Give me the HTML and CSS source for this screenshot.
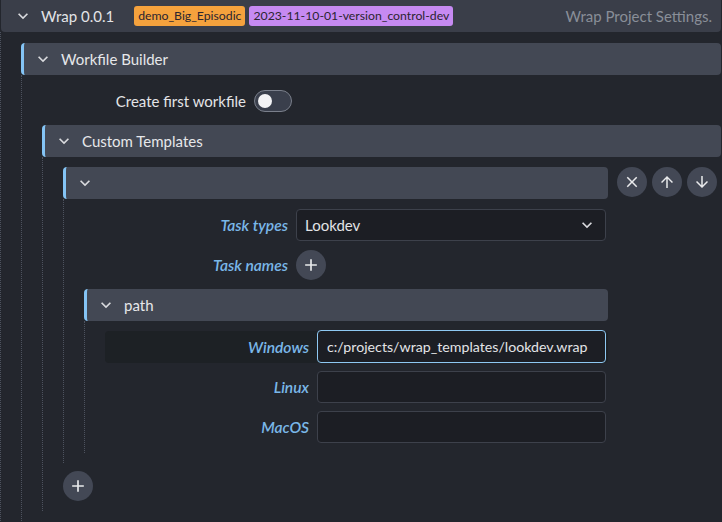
FILE: index.html
```html
<!DOCTYPE html>
<html lang="en">
<head>
<meta charset="utf-8">
<title>Wrap Project Settings</title>
<link rel="stylesheet" href="styles.css">
</head>
<body>
<div class="root">
  <div class="top-header">
    <svg class="chev" viewBox="0 0 24 24"><path d="M16.59 8.59L12 13.17 7.41 8.59 6 10l6 6 6-6z"/></svg>
    <span class="title">Wrap 0.0.1</span>
    <span class="badge badge-orange">demo_Big_Episodic</span>
    <span class="badge badge-purple">2023-11-10-01-version_control-dev</span>
    <span class="hint">Wrap Project Settings.</span>
  </div>
  <div class="content root-content">
    <section class="section">
      <div class="sec-head">
        <svg class="chev" viewBox="0 0 24 24"><path d="M16.59 8.59L12 13.17 7.41 8.59 6 10l6 6 6-6z"/></svg>
        <span>Workfile Builder</span>
      </div>
      <div class="content">
        <div class="field">
          <span class="label plain">Create first workfile</span>
          <span class="toggle"><span class="knob"></span></span>
        </div>
        <section class="section">
          <div class="sec-head">
            <svg class="chev" viewBox="0 0 24 24"><path d="M16.59 8.59L12 13.17 7.41 8.59 6 10l6 6 6-6z"/></svg>
            <span>Custom Templates</span>
          </div>
          <div class="content">
            <div class="item">
              <div class="item-main">
                <div class="sec-head">
                  <svg class="chev" viewBox="0 0 24 24"><path d="M16.59 8.59L12 13.17 7.41 8.59 6 10l6 6 6-6z"/></svg>
                </div>
                <div class="content">
                  <div class="field">
                    <span class="label">Task types</span>
                    <div class="select">
                      <span>Lookdev</span>
                      <svg class="chev" viewBox="0 0 24 24"><path d="M16.59 8.59L12 13.17 7.41 8.59 6 10l6 6 6-6z"/></svg>
                    </div>
                  </div>
                  <div class="field">
                    <span class="label">Task names</span>
                    <span class="circle-btn">
                      <svg class="icon-plus" viewBox="0 0 24 24"><path d="M19 13h-6v6h-2v-6H5v-2h6V5h2v6h6v2z"/></svg>
                    </span>
                  </div>
                  <section class="section">
                    <div class="sec-head">
                      <svg class="chev" viewBox="0 0 24 24"><path d="M16.59 8.59L12 13.17 7.41 8.59 6 10l6 6 6-6z"/></svg>
                      <span>path</span>
                    </div>
                    <div class="content">
                      <div class="field field-active">
                        <span class="label">Windows</span>
                        <div class="input input-focus">c:/projects/wrap_templates/lookdev.wrap</div>
                      </div>
                      <div class="field">
                        <span class="label">Linux</span>
                        <div class="input"></div>
                      </div>
                      <div class="field">
                        <span class="label">MacOS</span>
                        <div class="input"></div>
                      </div>
                    </div>
                  </section>
                </div>
              </div>
              <div class="item-tools">
                <span class="circle-btn">
                  <svg class="icon" viewBox="0 0 24 24"><path d="M19 6.41L17.59 5 12 10.59 6.41 5 5 6.41 10.59 12 5 17.59 6.41 19 12 13.41 17.59 19 19 17.59 13.41 12z"/></svg>
                </span>
                <span class="circle-btn">
                  <svg class="icon" viewBox="0 0 24 24"><path d="M4 12l1.41 1.41L11 7.83V20h2V7.83l5.58 5.59L20 12l-8-8-8 8z"/></svg>
                </span>
                <span class="circle-btn">
                  <svg class="icon" viewBox="0 0 24 24"><path d="M20 12l-1.41-1.41L13 16.17V4h-2v12.17l-5.58-5.59L4 12l8 8 8-8z"/></svg>
                </span>
              </div>
            </div>
            <span class="circle-btn">
              <svg class="icon-plus" viewBox="0 0 24 24"><path d="M19 13h-6v6h-2v-6H5v-2h6V5h2v6h6v2z"/></svg>
            </span>
          </div>
        </section>
      </div>
    </section>
  </div>
</div>
</body>
</html>
```

FILE: styles.css
```css
* { box-sizing: border-box; }

html, body {
  margin: 0;
  padding: 0;
  background: #23262d;
  color: #e3e4e7;
  font-family: Lato, "Noto Sans", sans-serif;
  font-size: 15px;
  overflow: hidden;
  height: 100%;
}

.root {
  margin-right: 1px;
  height: 100%;
  display: flex;
  flex-direction: column;
}

.top-header {
  height: 32px;
  margin-left: 1px;
  background: #3a3e49;
  border-radius: 0 0 4px 4px;
  display: flex;
  align-items: center;
  padding: 0 9px 0 12px;
  flex-shrink: 0;
}

.chev {
  width: 20px;
  height: 20px;
  fill: #d9dade;
  flex-shrink: 0;
}

.title {
  margin-left: 8px;
  margin-right: 20px;
  font-size: 15px;
}

.badge {
  height: 20px;
  line-height: 20px;
  padding: 0 4px;
  border-radius: 3px;
  font-size: 12.25px;
  color: #2b2530;
  margin-right: 4px;
}

.badge-orange { background: #f5a23d; }
.badge-purple { background: #c68af2; }

.hint {
  margin-left: auto;
  color: #898e98;
  font-size: 15px;
}

.content {
  border-left: 1px dotted #4d525e;
  padding: 10px 0 10px 20px;
  display: flex;
  flex-direction: column;
  gap: 8px;
  min-width: 0;
}

.root-content {
  padding-top: 11px;
  flex: 1;
}

.sec-head {
  height: 32px;
  background: #434854;
  border-left: 3px solid #84c4f5;
  border-radius: 4px;
  display: flex;
  align-items: center;
  gap: 8px;
  padding-left: 9px;
  color: #e6e7ea;
}

.field {
  display: grid;
  grid-template-columns: 204px minmax(0, 1fr);
  column-gap: 8px;
  align-items: center;
  min-height: 32px;
  padding-right: 2px;
}

.label {
  text-align: right;
  font-style: italic;
  color: #7ab7e8;
  font-weight: 600;
  font-size: 15.6px;
}

.label.plain {
  font-style: normal;
  font-weight: 400;
  font-size: 15px;
  color: #e3e4e7;
}

.field-active {
  background: #1d2125;
  border-radius: 4px;
}

.toggle {
  width: 38px;
  height: 22px;
  border-radius: 11px;
  border: 1px solid #7a7f8b;
  background: #3a3f4c;
  display: flex;
  align-items: center;
  padding-left: 3px;
}

.knob {
  width: 14px;
  height: 14px;
  border-radius: 50%;
  background: #f3f3f5;
}

.select {
  height: 32px;
  background: #1c1e24;
  border: 1px solid #3d414b;
  border-radius: 4px;
  display: flex;
  align-items: center;
  justify-content: space-between;
  padding: 0 8px 0 8px;
}

.input {
  height: 32px;
  background: #1c1e24;
  border: 1px solid #3d414b;
  border-radius: 4px;
  padding: 0 9px;
  display: flex;
  align-items: center;
  white-space: nowrap;
  overflow: hidden;
  font-size: 14.2px;
}

.input-focus {
  border: 1.5px solid #8ec8f2;
  margin-top: -1px;
  height: 33px;
}

.circle-btn {
  width: 30px;
  height: 30px;
  border-radius: 50%;
  background: #434855;
  display: flex;
  align-items: center;
  justify-content: center;
  flex-shrink: 0;
}

.icon {
  width: 18px;
  height: 18px;
  fill: #e9eaec;
}

.icon-plus {
  width: 20px;
  height: 20px;
  fill: #e9eaec;
}

.item {
  display: flex;
  align-items: flex-start;
  gap: 9px;
  padding-right: 4px;
}

.item-main {
  flex: 1;
  min-width: 0;
  display: flex;
  flex-direction: column;
}

.item-tools {
  display: flex;
  gap: 5px;
}
```
